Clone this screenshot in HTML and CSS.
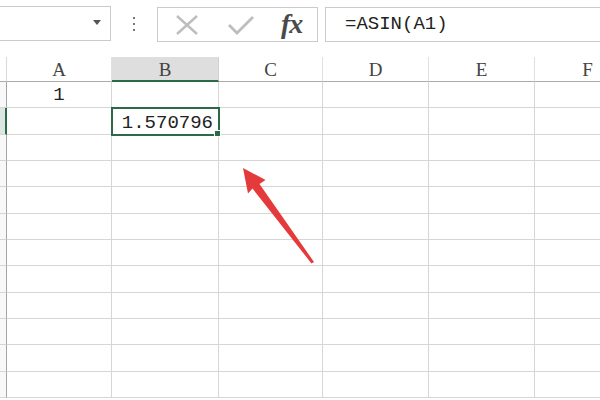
FILE: index.html
```html
<!DOCTYPE html>
<html lang="zh">
<head>
  <meta charset="UTF-8">
  <title>ASIN</title>
  <link rel="stylesheet" href="styles.css">
</head>
<body>
  <!-- Formula bar -->
  <div class="formula-bar">
    <div class="name-box"><span class="dropdown"></span></div>
    <div class="grip"><i></i><i></i><i></i></div>
    <div class="func-box">
      <svg class="ico" width="26" height="22" viewBox="0 0 26 22">
        <path d="M3 2 L23 20 M23 2 L3 20" stroke="#bdbdbd" stroke-width="2.4" fill="none"/>
      </svg>
      <svg class="ico" width="28" height="22" viewBox="0 0 28 22">
        <path d="M2 11 L10 19 L26 3" stroke="#bdbdbd" stroke-width="2.8" fill="none"/>
      </svg>
      <span class="fx">fx</span>
    </div>
    <div class="formula-box">=ASIN(A1)</div>
  </div>

  <!-- Sheet grid -->
  <div class="sheet-view">
    <div class="sheet">
      <div class="corner"></div>
      <div class="col-head">A</div>
      <div class="col-head active">B</div>
      <div class="col-head">C</div>
      <div class="col-head">D</div>
      <div class="col-head">E</div>
      <div class="col-head">F</div>

      <div class="row-head"></div><div class="cell center">1</div><div class="cell"></div><div class="cell"></div><div class="cell"></div><div class="cell"></div><div class="cell"></div>
      <div class="row-head active"></div><div class="cell"></div><div class="cell selected">1.570796</div><div class="cell"></div><div class="cell"></div><div class="cell"></div><div class="cell"></div>
      <div class="row-head"></div><div class="cell"></div><div class="cell"></div><div class="cell"></div><div class="cell"></div><div class="cell"></div><div class="cell"></div>
      <div class="row-head"></div><div class="cell"></div><div class="cell"></div><div class="cell"></div><div class="cell"></div><div class="cell"></div><div class="cell"></div>
      <div class="row-head"></div><div class="cell"></div><div class="cell"></div><div class="cell"></div><div class="cell"></div><div class="cell"></div><div class="cell"></div>
      <div class="row-head"></div><div class="cell"></div><div class="cell"></div><div class="cell"></div><div class="cell"></div><div class="cell"></div><div class="cell"></div>
      <div class="row-head"></div><div class="cell"></div><div class="cell"></div><div class="cell"></div><div class="cell"></div><div class="cell"></div><div class="cell"></div>
      <div class="row-head"></div><div class="cell"></div><div class="cell"></div><div class="cell"></div><div class="cell"></div><div class="cell"></div><div class="cell"></div>
      <div class="row-head"></div><div class="cell"></div><div class="cell"></div><div class="cell"></div><div class="cell"></div><div class="cell"></div><div class="cell"></div>
      <div class="row-head"></div><div class="cell"></div><div class="cell"></div><div class="cell"></div><div class="cell"></div><div class="cell"></div><div class="cell"></div>
      <div class="row-head"></div><div class="cell"></div><div class="cell"></div><div class="cell"></div><div class="cell"></div><div class="cell"></div><div class="cell"></div>
      <div class="row-head"></div><div class="cell"></div><div class="cell"></div><div class="cell"></div><div class="cell"></div><div class="cell"></div><div class="cell"></div>
    </div>
  </div>

  <!-- Red pointer arrow -->
  <svg class="arrow" width="600" height="400" viewBox="0 0 600 400">
    <polygon points="243,168 265.5,180 259.5,184 314,262 311.5,263.5 252.5,188.5 248,193.5" fill="#e53a3b"/>
  </svg>
</body>
</html>
```

FILE: styles.css
```css
* {
  margin: 0;
  padding: 0;
  box-sizing: border-box;
}

html {
  overflow: hidden;
}

body {
  width: 600px;
  height: 400px;
  overflow: hidden;
  background: #fff;
  font-family: "Liberation Mono", "DejaVu Sans Mono", monospace;
  color: #222;
  position: relative;
}

/* formula bar */
.formula-bar {
  display: flex;
  align-items: flex-start;
  height: 57px;
  padding-top: 6px;
}

.name-box {
  width: 111px;
  height: 35px;
  border: 1px solid #cbcbcb;
  border-left: none;
  display: flex;
  align-items: center;
  justify-content: flex-end;
  padding-right: 9px;
  padding-bottom: 3px;
}

.dropdown {
  width: 0;
  height: 0;
  border-left: 4px solid transparent;
  border-right: 4px solid transparent;
  border-top: 5px solid #555;
}

.grip {
  width: 46px;
  height: 35px;
  display: flex;
  flex-direction: column;
  align-items: center;
  justify-content: center;
  gap: 4px;
}

.grip i {
  display: block;
  width: 2px;
  height: 2px;
  background: #777;
}

.func-box {
  width: 161px;
  height: 35px;
  margin-top: 1px;
  border: 1px solid #cbcbcb;
  display: flex;
  align-items: center;
  padding-left: 16px;
}

.ico {
  display: block;
}

.ico + .ico {
  margin-left: 27px;
}

.fx {
  margin-left: 26px;
  font-family: "Liberation Serif", "DejaVu Serif", serif;
  font-style: italic;
  font-weight: bold;
  font-size: 28px;
  color: #4a4a4a;
  letter-spacing: -1px;
  line-height: 1;
  margin-bottom: 1px;
}

.formula-box {
  flex: 1;
  height: 35px;
  margin-top: 1px;
  margin-left: 7px;
  border: 1px solid #cbcbcb;
  border-right: none;
  padding-left: 19px;
  font-size: 19px;
  line-height: 33px;
}

/* sheet */
.sheet-view {
  width: 600px;
  height: 343px;
  overflow: hidden;
}

.sheet {
  display: grid;
  grid-template-columns: 7px 105px 107px 104px 106px 106px 106px;
  grid-template-rows: 25px 26px 27px 26px 26px 27px 26px 26px 27px 26px 26px 27px 26px;
}

.corner {
  border-right: 1px solid #dadada;
  border-bottom: 1px solid #ababab;
}

.col-head {
  border-right: 1px solid #e0e0e0;
  border-bottom: 1px solid #ababab;
  text-align: center;
  font-family: "Liberation Serif", "DejaVu Serif", serif;
  font-size: 19px;
  line-height: 25px;
  color: #444;
}

.col-head.active {
  background: #dedede;
  border-bottom: 2px solid #2c6a47;
  border-right-color: #d0d0d0;
}

.row-head {
  background: #f8f8f8;
  border-right: 1px solid #a6a6a6;
  border-bottom: 1px solid #d6d6d6;
}

.row-head.active {
  background: #dde6e0;
  border-right: 2px solid #2c6a47;
}

.cell {
  border-right: 1px solid #d6d6d6;
  border-bottom: 1px solid #d6d6d6;
  font-size: 19px;
  line-height: 25px;
}

.cell.center {
  text-align: center;
  padding-top: 1px;
}

.cell.selected {
  position: relative;
  outline: 2px solid #2c6a47;
  outline-offset: -1px;
  text-align: right;
  padding-right: 5px;
  padding-top: 3px;
}

.cell.selected::after {
  content: '';
  position: absolute;
  right: -3px;
  bottom: -3px;
  width: 5px;
  height: 5px;
  background: #2c6a47;
  border: 1px solid #fff;
}

.arrow {
  position: absolute;
  top: 0;
  left: 0;
  pointer-events: none;
}
```
